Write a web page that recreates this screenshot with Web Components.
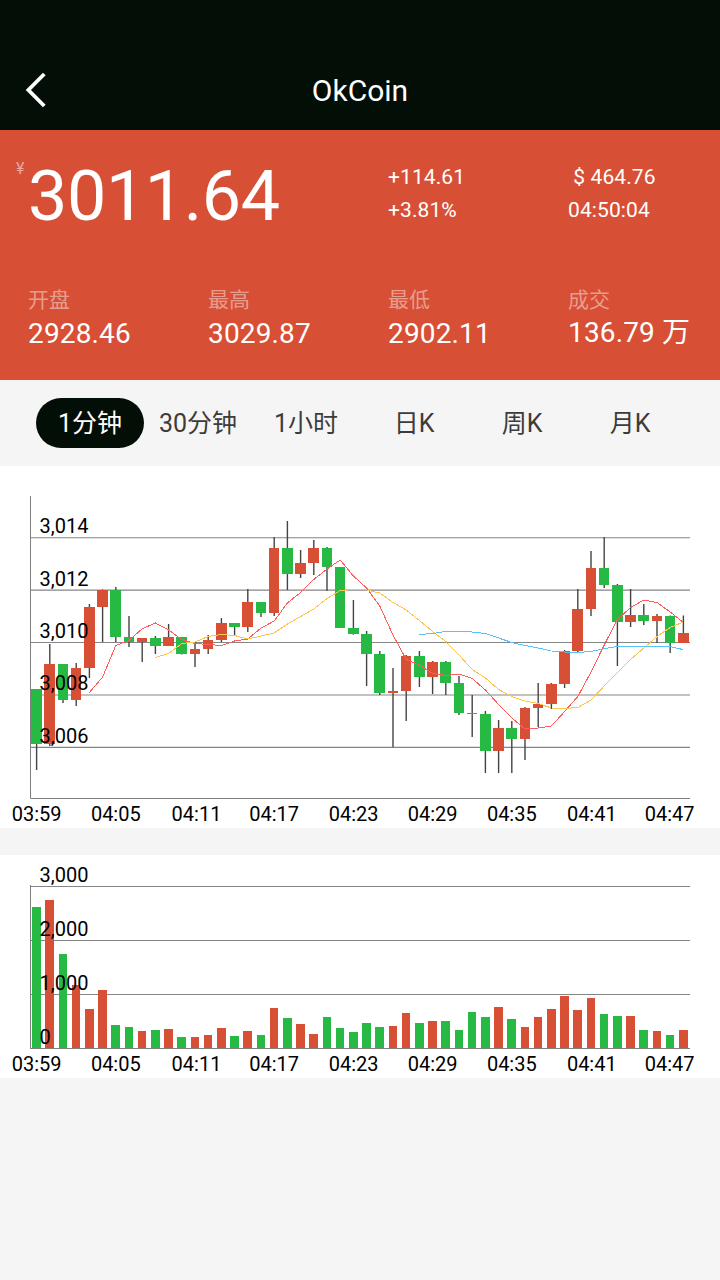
<!DOCTYPE html>
<html lang="zh-CN">
<head>
<meta charset="utf-8">
<title>OkCoin</title>
<style>
  body {
    margin: 0;
    background-color: #f5f5f5;
    font-family: Roboto, 'Noto Sans CJK SC', sans-serif;
  }
</style>
</head>
<body>
<ticker-page></ticker-page>

<script>
// one entry per minute: high, body top, body bottom, low (px from the plot top), direction
const CANDLES = [
  [199, 199, 254, 280, 'g'], [154, 174, 254, 256, 'r'], [174, 174, 210, 213, 'g'], [173, 178, 210, 216, 'r'],
  [114, 117, 178, 188, 'r'], [99.5, 100, 117, 152, 'r'], [97, 100, 147, 152, 'g'], [126, 147, 152, 157, 'g'],
  [148, 148, 152, 172, 'r'], [146, 148, 156, 164, 'g'], [134, 147, 156, 156, 'r'], [147, 147, 164, 164.5, 'g'],
  [152, 159, 164, 177, 'r'], [145, 150, 159, 164, 'r'], [128, 133, 150, 152, 'r'], [133, 133, 137, 145, 'g'],
  [99, 112, 137, 142, 'r'], [112, 112, 123, 127, 'g'], [47, 58, 123, 126, 'r'], [31, 58, 84, 100, 'g'],
  [60, 73, 84, 88, 'r'], [50, 58, 73, 85, 'r'], [57, 58, 77, 101, 'g'], [77, 77, 138, 138, 'g'],
  [110, 138, 144, 144.7, 'g'], [141, 144, 164, 196, 'g'], [161, 164, 203, 205, 'g'], [178, 201, 203, 257, 'r'],
  [165, 166, 201, 231, 'r'], [161, 166, 187, 197, 'g'], [171, 172, 187, 204, 'r'], [171, 172, 193, 205, 'g'],
  [186, 193, 223, 225, 'g'], [205, 223, 224, 247, 'g'], [221, 224, 261, 283, 'g'], [230, 238, 261, 283, 'r'],
  [231, 238, 249, 283, 'g'], [217, 218, 249, 270, 'r'], [193, 214, 218, 237, 'r'], [193, 194, 214, 219, 'r'],
  [160, 161, 194, 198, 'r'], [99, 119, 161, 162, 'r'], [61, 78, 119, 126, 'r'], [47, 78, 95, 98, 'g'],
  [94, 95, 132, 176, 'g'], [99, 125, 132, 137, 'r'], [114, 125, 131, 135, 'g'], [124, 126, 131, 153, 'r'],
  [125.5, 126, 153, 163, 'g'], [125.5, 143, 153, 153, 'r']
];

const AVERAGES = [
  { color: '#ff5c5c', start: 4, points: [202.5, 187, 155.5, 150.5, 138.7, 133, 140, 149.5, 153.5, 154.5, 155.5, 151, 149, 138, 131, 113, 102.5, 89.5, 79, 70, 86, 98, 116, 145, 169.5, 175, 183.5, 185.5, 184, 188.5, 200, 214.5, 228, 239, 238, 236, 221.5, 206.5, 182, 155, 129.5, 117.5, 110, 112.5, 122, 132.5] },
  { color: '#ffc34f', start: 9, points: [167.5, 163.5, 153.5, 152, 146.5, 144.5, 145.5, 149, 146, 143, 134, 126.5, 119, 108.5, 100.5, 99.7, 100, 103, 112.5, 120, 130.5, 141.5, 151.5, 165, 179.5, 188, 199.5, 206.5, 211, 213.5, 218, 218.5, 217.5, 210, 196, 182.5, 169.5, 158, 146.5, 137.5, 132] },
  { color: '#58c2ff', start: 29, points: [144.5, 143.5, 141.5, 141.5, 142, 143.5, 148, 152.5, 155.5, 158, 161, 162, 162.5, 161.5, 158.7, 156.5, 156.5, 156.5, 156.5, 156.5, 159.7] }
];

// bar heights in px, 54 px for each 1,000
const VOLUMES = [
  141, 148, 94, 63, 39, 58, 23, 21, 17, 18, 19, 11, 11, 13, 20, 12, 17, 13, 40, 30, 24, 14, 31, 20, 16,
  25, 21, 22, 35, 25, 27, 27, 18, 36, 31, 41, 29, 21, 31, 39, 52, 38, 50, 34, 32, 32, 18, 17, 13, 18
];

// label and its horizontal nudge
const TIMES = [
  ['03:59', 0], ['04:05', 0], ['04:11', 1.5], ['04:17', 0], ['04:23', 0.3],
  ['04:29', 0], ['04:35', 0], ['04:41', 0.8], ['04:47', -0.5]
];
const COLORS = { r: '#d75036', g: '#26b943' };
const STEP = 13.2;

const centerX = (i) => 36.6 + STEP * i;
const snap = (v) => Math.round(v - 0.05);

const bar = (i, width, top, bottom) => {
  const left = snap(centerX(i) - width / 2);
  const right = snap(centerX(i) + width / 2);
  return `<rect x="${left}" y="${top}" width="${right - left}" height="${bottom - top}" fill="${COLORS[CANDLES[i][4]]}"/>`;
};

const timeLabels = (y) => TIMES.map(([time, nudge], i) =>
  `<text x="${centerX(i * 6) + nudge}" y="${y}" text-anchor="middle">${time}</text>`).join('');

const chartStyle = `
  :host {
    display: block;
    background-color: #fff;
  }
  svg {
    display: block;
  }
  text {
    font-size: 20px;
    fill: #000;
  }
  .grid {
    stroke: #858585;
    stroke-width: 1.1;
  }
  .axis {
    stroke: #808080;
    fill: none;
  }
  .wick {
    stroke: #444;
    stroke-width: 1.4;
  }
`;

class NavBar extends HTMLElement {
  constructor() {
    super();
    this.attachShadow({mode: 'open'}).innerHTML = `
      <style>
        :host {
          display: grid;
          grid-template-columns: 72px 1fr 72px;
          align-items: center;
          box-sizing: border-box;
          height: 130px;
          padding-top: 50px;
          background-color: #030f06;
          color: #fff;
        }
        svg {
          display: block;
        }
        h1 {
          margin: 0;
          padding-top: 2px;
          font-size: 30px;
          font-weight: normal;
          line-height: 40px;
          text-align: center;
        }
      </style>
      <svg width="72" height="80" viewBox="0 0 72 80" fill="none" stroke="#fff" stroke-width="3.8">
        <path d="M44.3 24L28.4 40L44.3 56"/>
      </svg>
      <h1><slot></slot></h1>
    `;
  }
}

class StatItem extends HTMLElement {
  connectedCallback() {
    this.attachShadow({mode: 'open'}).innerHTML = `
      <style>
        :host {
          display: block;
          white-space: nowrap;
        }
        .label {
          font-size: 21px;
          line-height: 30px;
          color: rgba(255, 255, 255, 0.45);
        }
        .value {
          font-size: 28px;
          line-height: 38px;
          letter-spacing: 0.15px;
        }
        :host([unit]) .value {
          line-height: 36px;
        }
      </style>
      <div class="label">${this.getAttribute('label')}</div>
      <div class="value"><slot></slot></div>
    `;
  }
}

class QuotePanel extends HTMLElement {
  constructor() {
    super();
    this.attachShadow({mode: 'open'}).innerHTML = `
      <style>
        :host {
          display: block;
          box-sizing: border-box;
          height: 250px;
          background-color: #d75036;
          color: #fff;
        }
        .top, .stats {
          display: grid;
          align-items: start;
        }
        .top {
          grid-template-columns: 372px 180px 1fr;
          padding: 30px 0 0 16px;
          height: 125px;
        }
        .price {
          display: flex;
          align-items: flex-start;
        }
        .currency {
          width: 12px;
          font-size: 16px;
          line-height: 18px;
          color: rgba(255, 255, 255, 0.5);
        }
        .amount {
          font-size: 70px;
          line-height: 72px;
          letter-spacing: -0.4px;
        }
        .lines {
          padding-top: 1px;
          font-size: 21px;
          line-height: 33px;
          letter-spacing: 0.1px;
          white-space: pre;
        }
        .stats {
          grid-template-columns: 180px 180px 180px 1fr;
          padding-left: 28px;
        }
      </style>
      <div class="top">
        <div class="price"><span class="currency">¥</span><span class="amount">3011.64</span></div>
        <div class="lines"><div>+114.61</div><div>+3.81%</div></div>
        <div class="lines"><div> $ 464.76</div><div>04:50:04</div></div>
      </div>
      <div class="stats">
        <stat-item label="开盘">2928.46</stat-item>
        <stat-item label="最高">3029.87</stat-item>
        <stat-item label="最低">2902.11</stat-item>
        <stat-item label="成交" unit>136.79 万</stat-item>
      </div>
    `;
  }
}

class PeriodTab extends HTMLElement {
  constructor() {
    super();
    this.attachShadow({mode: 'open'}).innerHTML = `
      <style>
        :host {
          display: block;
          flex: 1;
          height: 50px;
          border-radius: 25px;
          font-size: 25px;
          line-height: 52px;
          text-align: center;
          color: #3c3c3c;
        }
        :host([active]) {
          background-color: #030f06;
          color: #fff;
        }
      </style>
      <slot></slot>
    `;
  }
}

class PeriodTabs extends HTMLElement {
  constructor() {
    super();
    this.attachShadow({mode: 'open'}).innerHTML = `
      <style>
        :host {
          display: flex;
          padding: 18px 36px;
        }
      </style>
      <slot></slot>
    `;
  }
}

class CandleChart extends HTMLElement {
  constructor() {
    super();
    this.attachShadow({mode: 'open'});
  }

  connectedCallback() {
    this.render();
  }

  render() {
    const rows = [3014, 3012, 3010, 3008, 3006].map((price, i) => ({
      text: price.toLocaleString('en-US'),
      y: 47.7 + 52.43 * i
    }));
    const wicks = CANDLES.map((c, i) =>
      `<line class="wick" x1="${centerX(i)}" x2="${centerX(i)}" y1="${c[0]}" y2="${c[3]}"/>`).join('');
    const averages = AVERAGES.map((line) => {
      const points = line.points.map((y, i) => `${centerX(line.start + i).toFixed(1)},${y}`).join(' ');
      return `<polyline points="${points}" fill="none" stroke="${line.color}"/>`;
    }).join('');

    this.shadowRoot.innerHTML = `
      <style>${chartStyle}</style>
      <svg width="720" height="362" viewBox="0 -24 720 362">
        ${rows.map((row) => `<line class="grid" x1="30" x2="690" y1="${row.y}" y2="${row.y}"/>`).join('')}
        <path class="axis" d="M30.5 6V308.5H690"/>
        ${wicks}
        <g shape-rendering="crispEdges">
          ${CANDLES.map((c, i) => bar(i, STEP * 0.8, c[1], c[2])).join('')}
          ${averages}
        </g>
        ${rows.map((row) => `<text x="39.5" y="${Math.round(row.y - 4.6)}">${row.text}</text>`).join('')}
        ${timeLabels(331)}
      </svg>
    `;
  }
}

class VolumeChart extends HTMLElement {
  constructor() {
    super();
    this.attachShadow({mode: 'open'});
  }

  connectedCallback() {
    this.render();
  }

  render() {
    const rows = ['3,000', '2,000', '1,000', '0'].map((text, i) => ({ text, y: 31.5 + 54 * i }));

    this.shadowRoot.innerHTML = `
      <style>${chartStyle}</style>
      <svg width="720" height="223" viewBox="0 0 720 223">
        ${rows.map((row) => `<line class="grid" x1="30" x2="690" y1="${row.y}" y2="${row.y}"/>`).join('')}
        <g shape-rendering="crispEdges">
          ${VOLUMES.map((v, i) => bar(i, STEP * 0.65, 193 - v, 193)).join('')}
        </g>
        <path class="axis" d="M30.5 30V193.5H690"/>
        ${rows.map((row) => `<text x="39.5" y="${row.y - 4.5}">${row.text}</text>`).join('')}
        ${timeLabels(216)}
      </svg>
    `;
  }
}

class TickerPage extends HTMLElement {
  constructor() {
    super();
    this.attachShadow({mode: 'open'}).innerHTML = `
      <style>
        :host {
          display: block;
          width: 720px;
          min-height: 1280px;
          background-color: #f5f5f5;
        }
        volume-chart {
          margin-top: 27px;
        }
      </style>
      <nav-bar>OkCoin</nav-bar>
      <quote-panel></quote-panel>
      <period-tabs>
        <period-tab active>1分钟</period-tab>
        <period-tab>30分钟</period-tab>
        <period-tab>1小时</period-tab>
        <period-tab>日K</period-tab>
        <period-tab>周K</period-tab>
        <period-tab>月K</period-tab>
      </period-tabs>
      <candle-chart></candle-chart>
      <volume-chart></volume-chart>
    `;
  }
}

customElements.define('nav-bar', NavBar);
customElements.define('stat-item', StatItem);
customElements.define('quote-panel', QuotePanel);
customElements.define('period-tab', PeriodTab);
customElements.define('period-tabs', PeriodTabs);
customElements.define('candle-chart', CandleChart);
customElements.define('volume-chart', VolumeChart);
customElements.define('ticker-page', TickerPage);
</script>
</body>
</html>
